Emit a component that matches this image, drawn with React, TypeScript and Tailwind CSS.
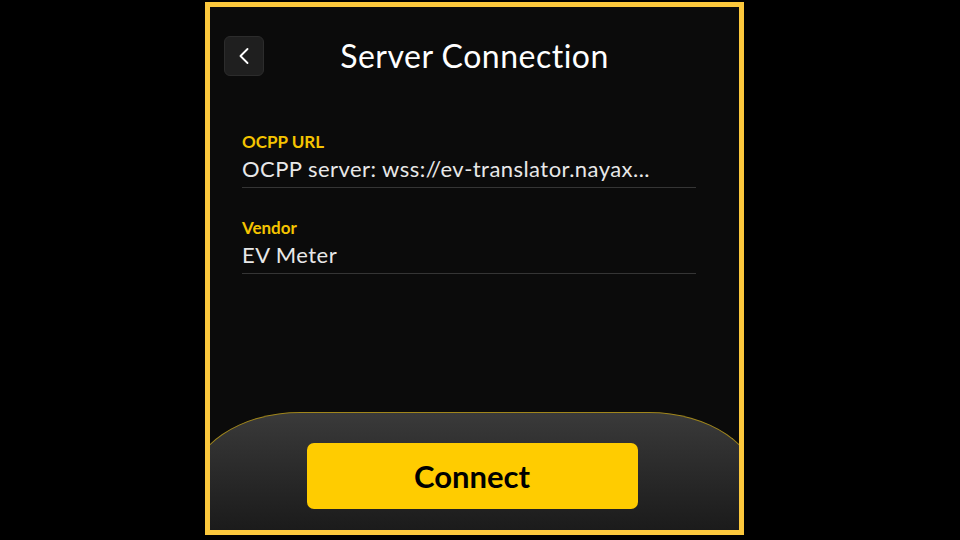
import { ChevronLeft } from "lucide-react";

const fields = [
  { label: "OCPP URL", value: "OCPP server: wss://ev-translator.nayax..." },
  { label: "Vendor", value: "EV Meter" },
];

export default function App() {
  return (
    <div className="flex h-[540px] w-[960px] justify-center bg-black font-['Lato',sans-serif]">
      <div className="mr-[11px] mt-[2px] flex h-[533px] w-[539px] flex-col overflow-hidden border-[5px] border-[#fcc83c] bg-[#0b0b0b]">
        <header className="grid grid-cols-[40px_1fr_40px] items-center px-[14px] pt-[29px]">
          <button className="grid size-[40px] place-items-center rounded-[6px] border border-[#2c2c2c] bg-[#1f1f1f] text-white">
            <ChevronLeft size={28} strokeWidth={1.6} />
          </button>
          <h1 className="text-center text-[32px] leading-none tracking-[0.5px] text-white">Server Connection</h1>
          <span />
        </header>

        <div className="mt-[56px] flex flex-col gap-[30px] pl-[32px] pr-[43px]">
          {fields.map((field) => (
            <div key={field.label} className="border-b border-[#353535] pb-[5px]">
              <p className="text-[17px] font-bold leading-[20px] text-[#f5c400]">{field.label}</p>
              <p className="mt-[3px] text-[22px] leading-[27px] tracking-[0.45px] text-[#e8e8e8]">{field.value}</p>
            </div>
          ))}
        </div>

        <div className="-mx-[20px] mt-auto flex h-[118px] justify-center rounded-t-[110px_75px] border-x border-t border-[#a0861c] bg-gradient-to-b from-[#3a3a3a] to-[#1b1b1b] pt-[30px]">
          <button className="mr-[5px] h-[66px] w-[331px] rounded-[7px] bg-[#ffcc00] text-[31px] font-bold text-black">Connect</button>
        </div>
      </div>
    </div>
  );
}
